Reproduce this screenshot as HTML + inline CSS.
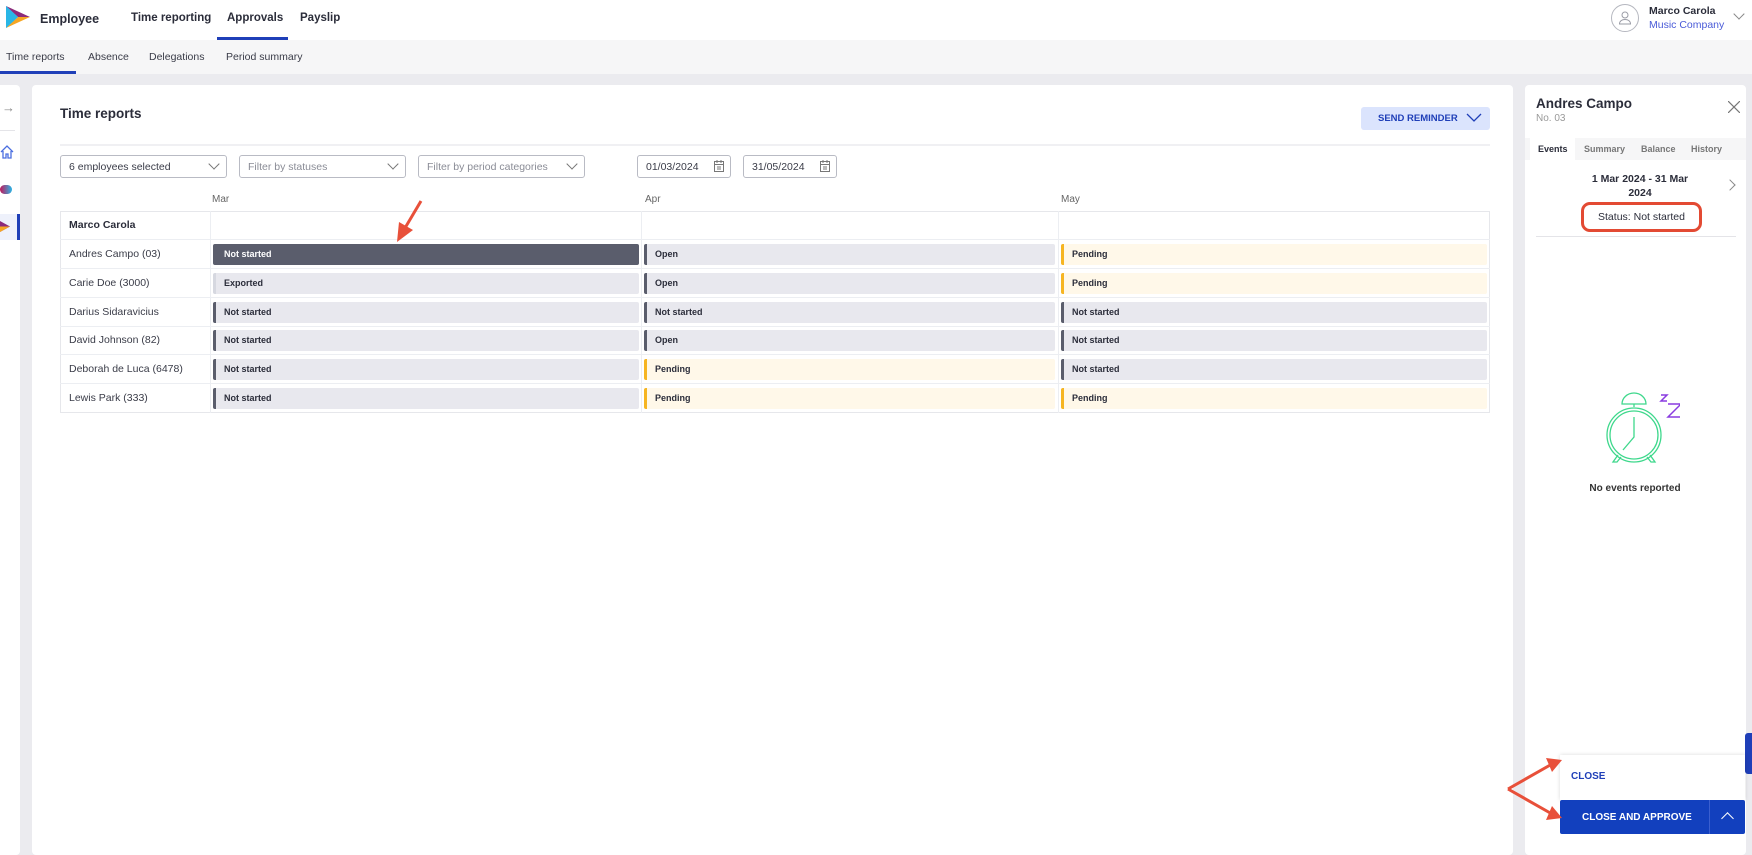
<!DOCTYPE html>
<html><head><meta charset="utf-8"><style>
*{box-sizing:border-box;margin:0;padding:0}
body{width:1752px;height:843px;overflow:hidden;background:#ebebef;font-family:"Liberation Sans",sans-serif;color:#2b2d3a;position:relative}
.a{position:absolute}
.top{left:0;top:0;width:1752px;height:40px;background:#fff}
.sub{left:0;top:40px;width:1752px;height:34px;background:#f6f6f7}
.nav{font-size:11.5px;font-weight:bold;color:#2b2d3a;top:12px}
.snav{font-size:10.5px;color:#3a3c48;top:51px}
.card{background:#fff;border-radius:4px}
.dd{height:23px;border:1px solid #b9bbc4;border-radius:3px;font-size:10.5px;color:#3a3c48;padding:5px 8px;background:#fff}
.dd.ph{color:#8a8c96}
.chev{position:absolute;right:8px;top:4px;width:8px;height:8px;border-right:1px solid #777;border-bottom:1px solid #777;transform:rotate(45deg)}
.row{left:60px;width:1430px;height:29px;border-bottom:1px solid #eceef2}
.nm{position:absolute;left:9px;top:8px;font-size:10.5px;color:#3a3c48}
.bar{position:absolute;top:4px;height:21px;border-radius:2px;font-size:9px;font-weight:bold;padding:5px 0 0 8px;color:#2b2d3a;border-left:3px solid #5a5d6c;background:#e8e8ee}
.bar.p{background:#fff8e9;border-left-color:#f6b522}
.bar.d{background:#5a5d6c;color:#fff;border-left-color:#5a5d6c}
.bar.e{border-left-color:#d6d8e0}
.vl{top:211px;width:1px;height:202px;background:#eceef2}
</style></head><body>
<div class="a top"></div>
<svg class="a" style="left:6px;top:6px" width="24" height="22" viewBox="0 0 24 22"><polygon points="0,0 0,22 12,11" fill="#1da1f2"/><polygon points="0,0 24,11 12,11" fill="#8c2a7a"/><polygon points="12,11 24,11 0,22" fill="#f6a623"/><polygon points="0,0 12,11 0,22" fill="#29b6e6"/></svg>
<div class="a" style="left:40px;top:12px;font-size:12.5px;font-weight:bold">Employee</div>
<div class="a nav" style="left:131px">Time reporting</div>
<div class="a nav" style="left:227px">Approvals</div>
<div class="a nav" style="left:300px">Payslip</div>
<div class="a" style="left:217px;top:37px;width:71px;height:3px;background:#1f3fb8"></div>
<div class="a" style="left:1611px;top:4px;width:28px;height:28px;border:1px solid #b5b7bf;border-radius:50%"></div>
<svg class="a" style="left:1617px;top:10px" width="16" height="16" viewBox="0 0 16 16" fill="none" stroke="#9a9ca6"><circle cx="8" cy="5" r="3"/><path d="M2.5 14c0-3 2.5-4.5 5.5-4.5s5.5 1.5 5.5 4.5z"/></svg>
<div class="a" style="left:1649px;top:5px;font-size:10.5px;font-weight:bold">Marco Carola</div>
<div class="a" style="left:1649px;top:19px;font-size:10.5px;color:#4a5bd8">Music Company</div>
<div class="a" style="left:1735px;top:10px;width:8px;height:8px;border-right:1px solid #888;border-bottom:1px solid #888;transform:rotate(45deg)"></div>
<div class="a sub"></div>
<div class="a snav" style="left:6px">Time reports</div>
<div class="a snav" style="left:88px">Absence</div>
<div class="a snav" style="left:149px">Delegations</div>
<div class="a snav" style="left:226px">Period summary</div>
<div class="a" style="left:0;top:71px;width:76px;height:3px;background:#1f3fb8"></div>

<div class="a card" style="left:-4px;top:85px;width:24px;height:770px"></div>
<div class="a" style="left:2px;top:100px;font-size:13px;color:#888">→</div>
<div class="a" style="left:0;top:130px;width:15px;height:1px;background:#e4e4e8"></div>
<svg class="a" style="left:0;top:145px" width="14" height="14" viewBox="0 0 14 14" fill="none" stroke="#4a6ee0" stroke-width="1.3"><path d="M1 7L7 1l6 6M3 6v7h3V9h2v4h3V6"/></svg>
<div class="a" style="left:0;top:185px;width:12px;height:9px;border-radius:5px;background:linear-gradient(90deg,#c2185b,#29b6e6)"></div>
<div class="a" style="left:0;top:214px;width:20px;height:26px;background:#eef1fb"></div>
<div class="a" style="left:17px;top:214px;width:3px;height:26px;background:#1f3fb8"></div>
<svg class="a" style="left:0;top:221px" width="10" height="11"><polygon points="0,0 10,5.5 0,11" fill="#8c2a7a"/><polygon points="0,5.5 10,5.5 0,11" fill="#f6a623"/></svg>

<div class="a card" style="left:32px;top:85px;width:1481px;height:770px"></div>
<div class="a" style="left:60px;top:106px;font-size:13.5px;font-weight:bold">Time reports</div>
<div class="a" style="left:1361px;top:107px;width:129px;height:23px;background:#dbe4fd;border-radius:3px;font-size:9.5px;font-weight:bold;color:#1f3fb8;padding:6px 0 0 17px">SEND REMINDER</div>
<svg class="a" style="left:1466px;top:113px" width="16" height="10" fill="none" stroke="#1f3fb8" stroke-width="1.3"><path d="M1 1l7 7 7-7"/></svg>
<div class="a" style="left:60px;top:144px;width:1430px;height:2px;background:#f0f0f3"></div>

<div class="a dd" style="left:60px;top:155px;width:167px">6 employees selected<span class="chev"></span></div>
<div class="a dd ph" style="left:239px;top:155px;width:167px">Filter by statuses<span class="chev"></span></div>
<div class="a dd ph" style="left:418px;top:155px;width:167px">Filter by period categories<span class="chev"></span></div>
<div class="a dd" style="left:637px;top:155px;width:94px">01/03/2024</div>
<div class="a dd" style="left:743px;top:155px;width:94px">31/05/2024</div>
<svg class="a" style="left:714px;top:160px" width="10" height="12" fill="none" stroke="#777"><rect x="0.5" y="1.5" width="9" height="10"/><path d="M0.5 4.5h9M3 0v3M7 0v3M3 7h4M3 9h4"/></svg>
<svg class="a" style="left:820px;top:160px" width="10" height="12" fill="none" stroke="#777"><rect x="0.5" y="1.5" width="9" height="10"/><path d="M0.5 4.5h9M3 0v3M7 0v3M3 7h4M3 9h4"/></svg>

<div class="a" style="left:212px;top:194px;font-size:10px;color:#666">Mar</div>
<div class="a" style="left:645px;top:194px;font-size:10px;color:#666">Apr</div>
<div class="a" style="left:1061px;top:194px;font-size:10px;color:#666">May</div>

<div class="a" style="left:60px;top:211px;width:1430px;height:202px;border:1px solid #e6e7eb"></div>
<div class="a row" style="top:211px"><span class="nm" style="font-weight:bold;color:#2b2d3a">Marco Carola</span></div>
<div class="a row" style="top:240px"><span class="nm">Andres Campo (03)</span><div class="bar d" style="left:153px;width:426px">Not started</div><div class="bar" style="left:584px;width:411px">Open</div><div class="bar p" style="left:1001px;width:426px">Pending</div></div>
<div class="a row" style="top:269px"><span class="nm">Carie Doe (3000)</span><div class="bar e" style="left:153px;width:426px">Exported</div><div class="bar" style="left:584px;width:411px">Open</div><div class="bar p" style="left:1001px;width:426px">Pending</div></div>
<div class="a row" style="top:298px"><span class="nm">Darius Sidaravicius</span><div class="bar" style="left:153px;width:426px">Not started</div><div class="bar" style="left:584px;width:411px">Not started</div><div class="bar" style="left:1001px;width:426px">Not started</div></div>
<div class="a row" style="top:326px"><span class="nm">David Johnson (82)</span><div class="bar" style="left:153px;width:426px">Not started</div><div class="bar" style="left:584px;width:411px">Open</div><div class="bar" style="left:1001px;width:426px">Not started</div></div>
<div class="a row" style="top:355px"><span class="nm">Deborah de Luca (6478)</span><div class="bar" style="left:153px;width:426px">Not started</div><div class="bar p" style="left:584px;width:411px">Pending</div><div class="bar" style="left:1001px;width:426px">Not started</div></div>
<div class="a row" style="top:384px;border-bottom:none"><span class="nm">Lewis Park (333)</span><div class="bar" style="left:153px;width:426px">Not started</div><div class="bar p" style="left:584px;width:411px">Pending</div><div class="bar p" style="left:1001px;width:426px">Pending</div></div>
<div class="a vl" style="left:210px"></div><div class="a vl" style="left:641px"></div><div class="a vl" style="left:1058px"></div>

<svg class="a" style="left:385px;top:198px" width="40" height="48"><path d="M36 3L20 30" stroke="#e8503a" stroke-width="3"/><polygon points="12,44 14,24 28,32" fill="#e8503a"/></svg>

<div class="a card" style="left:1525px;top:85px;width:221px;height:770px"></div>
<div class="a" style="left:1536px;top:96px;font-size:13.5px;font-weight:bold">Andres Campo</div>
<div class="a" style="left:1536px;top:113px;font-size:10px;color:#999">No. 03</div>
<svg class="a" style="left:1728px;top:101px" width="12" height="12" stroke="#777" stroke-width="1.2"><path d="M0 0L12 12M12 0L0 12"/></svg>
<div class="a" style="left:1525px;top:138px;width:221px;height:22px;background:#f6f6f7"></div>
<div class="a" style="left:1530px;top:138px;width:45px;height:22px;background:#fff"></div>
<div class="a" style="left:1538px;top:144px;font-size:9px;font-weight:bold">Events</div>
<div class="a" style="left:1584px;top:144px;font-size:9px;color:#777;font-weight:bold">Summary</div>
<div class="a" style="left:1641px;top:144px;font-size:9px;color:#777;font-weight:bold">Balance</div>
<div class="a" style="left:1691px;top:144px;font-size:9px;color:#777;font-weight:bold">History</div>
<div class="a" style="left:1580px;top:172px;width:120px;text-align:center;font-size:10.5px;font-weight:bold;line-height:14px">1 Mar 2024 - 31 Mar 2024</div>
<div class="a" style="left:1726px;top:181px;width:8px;height:8px;border-right:1px solid #888;border-top:1px solid #888;transform:rotate(45deg)"></div>
<div class="a" style="left:1581px;top:202px;width:121px;height:30px;border:3px solid #e34a33;border-radius:9px;font-size:10.5px;color:#2b2d3a;text-align:center;padding-top:6px">Status: Not started</div>
<div class="a" style="left:1536px;top:236px;width:200px;height:1px;background:#e4e4e8"></div>
<svg class="a" style="left:1600px;top:385px" width="80" height="90" fill="none" stroke="#3ed88c" stroke-width="1.3"><path d="M22 19a12 11 0 0 1 24 0z"/><path d="M34 19v3"/><circle cx="34" cy="50" r="27"/><circle cx="34" cy="50" r="24"/><path d="M34 32v20l-11 13"/><path d="M18 70l-5 7h4l4-5M50 70l5 7h-4l-4-5"/><path d="M61 10h6l-6 6h6M68 19h13l-13 13h13" stroke="#8a3ce0" stroke-width="1.5"/></svg>
<div class="a" style="left:1580px;top:483px;width:110px;text-align:center;font-size:10px;font-weight:bold;color:#333;white-space:nowrap">No events reported</div>

<div class="a" style="left:1745px;top:733px;width:10px;height:41px;background:#1f3fb8;border-radius:3px"></div>
<div class="a" style="left:1560px;top:755px;width:185px;height:45px;background:#fff;box-shadow:0 0 4px rgba(0,0,0,.15)"></div>
<div class="a" style="left:1571px;top:771px;font-size:10px;font-weight:bold;color:#1f3fb8">CLOSE</div>
<div class="a" style="left:1560px;top:800px;width:185px;height:34px;background:#1240be;border-radius:2px"></div>
<div class="a" style="left:1582px;top:812px;font-size:10px;font-weight:bold;color:#fff">CLOSE AND APPROVE</div>
<div class="a" style="left:1709px;top:800px;width:1px;height:34px;background:#3a5fd0"></div>
<div class="a" style="left:1723px;top:814px;width:9px;height:9px;border-left:1px solid #fff;border-top:1px solid #fff;transform:rotate(45deg)"></div>
<svg class="a" style="left:1500px;top:752px" width="64" height="72"><path d="M8 37L52 12M8 37L52 62" stroke="#e8503a" stroke-width="3"/><polygon points="62,8 46,6 52,20" fill="#e8503a"/><polygon points="62,66 46,68 52,54" fill="#e8503a"/></svg>
</body></html>
